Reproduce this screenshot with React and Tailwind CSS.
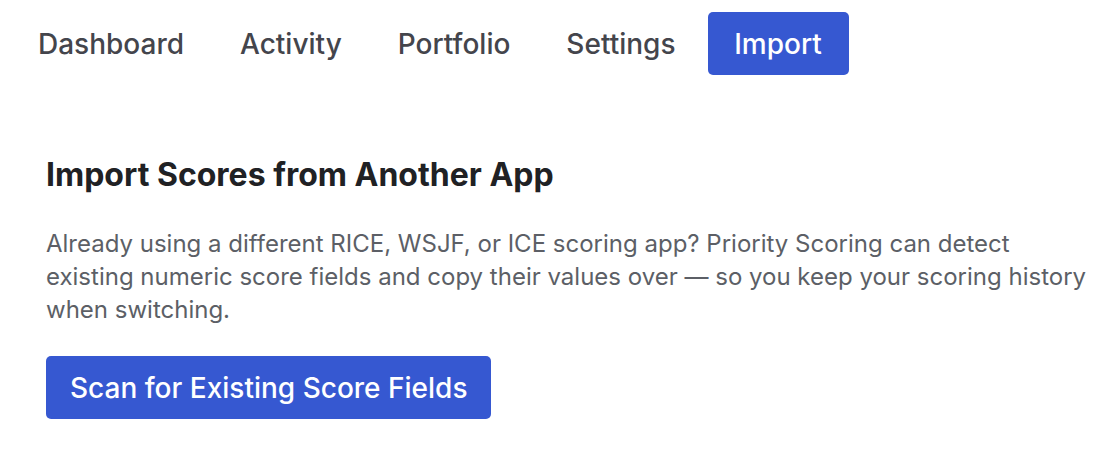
export default function App() {
  const tabs = ["Dashboard", "Activity", "Portfolio", "Settings", "Import"];
  return (
    <div className="w-[1112px] h-[452px] bg-white font-['Inter',sans-serif] overflow-hidden">
      <nav className="flex items-center gap-2 pl-[14px] pt-3">
        {tabs.map((t) =>
          t === "Import" ? (
            <button key={t} className="h-[63px] w-[141px] flex items-center justify-center rounded-[5px] bg-[#3658d1] text-white text-[28px] font-medium leading-none">
              {t}
            </button>
          ) : (
            <button key={t} className="h-[63px] px-6 rounded-[5px] text-[#44454c] text-[28px] font-medium leading-none">
              {t}
            </button>
          )
        )}
      </nav>
      <section className="pl-[46px] pr-[17px] pt-[80px]">
        <h2 className="text-[32px] font-bold text-[#202124] leading-[40px]">Import Scores from Another App</h2>
        <p className="mt-[32px] text-[24px] leading-[33px] text-[#5c5f66]">
          Already using a different RICE, WSJF, or ICE scoring app? Priority Scoring can detect existing numeric score fields and copy their values over — so you keep your scoring history when switching.
        </p>
        <button className="mt-[30px] h-[63px] px-6 rounded-[5px] bg-[#3658d1] text-white text-[28px] font-medium leading-none">
          Scan for Existing Score Fields
        </button>
      </section>
    </div>
  );
}
